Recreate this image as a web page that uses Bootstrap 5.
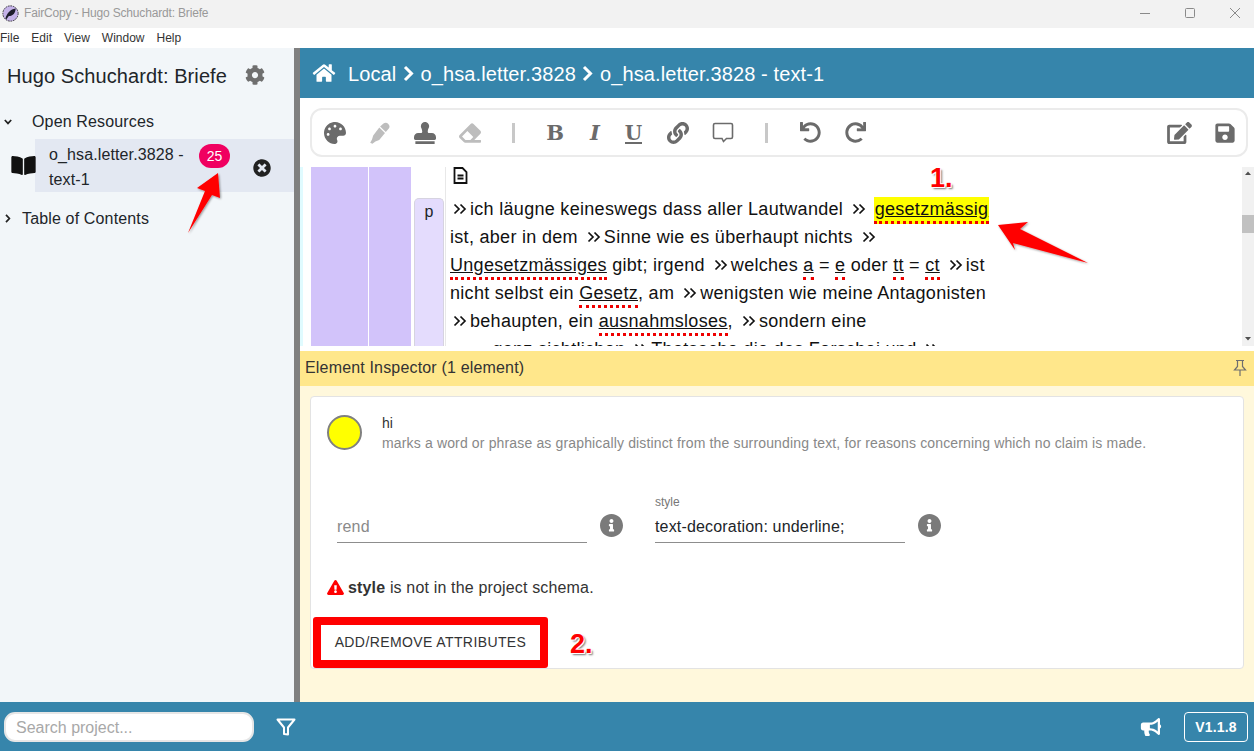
<!DOCTYPE html>
<html lang="en">
<head>
<meta charset="utf-8">
<title>FairCopy - Hugo Schuchardt: Briefe</title>
<link rel="stylesheet" href="https://cdn.jsdelivr.net/npm/bootstrap@5.3.0/dist/css/bootstrap.min.css">
<style>
html,body{height:100%;margin:0}
body{width:1254px;height:751px;overflow:hidden;font-family:"Liberation Sans",Arial,sans-serif;color:#212529;position:relative;background:#fff}
svg{display:block;flex:none}
.fc-title{height:28px;background:#f2f2f2;font-size:12px;letter-spacing:-.17px;color:#999;padding-bottom:2px}
.fc-logo{width:17px;height:17px;margin:0 5px 0 2px}
.fc-wins{margin-right:-3px}
.fc-win{width:45px;height:24px}
.fc-win svg{margin:auto}
.fc-menu{height:20px;font-size:12px;line-height:20px;color:#333;gap:12px}
.fc-main{height:654px}
.fc-side{width:294px;background:#f2f6f9;flex:none}
.fc-split{width:6px;background:#808080;flex:none}
.fc-proj{font-size:20px;line-height:24px;padding:16px 0 0 7px;height:61px;letter-spacing:.09px}
.fc-proj svg{margin-left:18px;fill:#6f6f6f}
.fc-tree{font-size:16px;line-height:24px;letter-spacing:.15px}
.fc-open{height:24px;margin-bottom:6px;padding:1px 0 0 4px;gap:20px}
.fc-toc{height:24px;margin-top:14px;padding:1px 0 0 5px;gap:11px}
.fc-res{height:53px;position:relative}
.fc-res-body{width:259px;margin-left:35px;height:53px;background:#e3e8f2;padding:4px 0 0 14px;line-height:24.5px;font-size:16px;letter-spacing:.12px}
.fc-res-text{width:146px}
.fc-book{position:absolute;left:11px;top:17px;fill:#111}
.fc-count{position:absolute;left:199px;top:5px;width:31px;height:24px;border-radius:12px;background:#f00060;color:#fff;font-size:14px;line-height:24px;text-align:center}
.fc-close{position:absolute;left:253px;top:20px}
.fc-head{height:50px;background:#3685ab;color:#fff;font-size:20px;letter-spacing:.12px;padding:2px 0 0 12px;gap:6.5px}
.fc-head .fc-home{margin:-2px 1.5px 0 0}
.fc-head svg{margin-top:-1px}
.fc-tools{height:69px;padding:10px 6px 10px 10px}
.fc-bar{height:49px;border:2px solid #ebebeb;border-radius:12px}
.fc-t{width:45px;height:45px;display:flex;align-items:center;justify-content:center;flex:none;fill:#6b6b6b;color:#6b6b6b}
.fc-t.fc-narrow{width:40px}
.fc-dim{fill:#bdbdbd}
.fc-sep{width:3px;height:20px;background:#c8c8c8;flex:none}
.fc-g{width:20px;flex:none}
.fc-serif{font-family:"DejaVu Serif",serif;font-weight:700;font-size:21px;line-height:1}
.fc-u{border-bottom:2px solid #6b6b6b;font-family:"DejaVu Serif",serif;font-weight:700;font-size:20px;padding:0;line-height:18px;margin:2px 0 0 -3px}
.fc-endbtn{margin-right:-1px}
.fc-ed{height:179px;overflow:hidden}
.fc-cyan{width:3px;background:#e0fbff;flex:none}
.fc-b1{width:57px;margin-left:8px;background:#d2c3fa;flex:none}
.fc-b2{width:42px;margin-left:1px;background:#d2c3fa;flex:none}
.fc-tab{width:30px;margin:31px 0 0 3px;background:#e4dcfd;border:1px solid #d6d3e0;border-bottom:0;border-radius:5px 5px 0 0;text-align:center;font-size:16px;line-height:26px;flex:none}
.fc-text{margin-left:1px;border-left:1px solid #e8e8e8;padding-left:4px;font-size:18px;letter-spacing:.3px;line-height:28px;color:#111;white-space:nowrap;flex:1 1 auto;width:0;min-width:0}
.fc-doc{height:17px;padding-left:3px;margin-bottom:11px;overflow:hidden}
.fc-line{height:28px;display:flex;align-items:center}
.fc-line svg{margin:0 3px 0 3px}
.fc-sp{width:6px;display:inline-block;flex:none}
.fc-err{text-decoration:underline;border-bottom:3px dotted #e00;line-height:24px;height:27px;display:inline-block;margin-top:3px}
.fc-hl{background:#ff0;margin-left:5px;padding:0 .5px}
.fc-pre{white-space:pre}
.fc-scroll{width:12px;background:#f1f1f1;position:relative;flex:none}
.fc-thumb{position:absolute;top:48px;left:0;width:12px;height:18px;background:#c1c1c1}
.fc-gap{height:5px}
.fc-ins-h{height:35px;background:#ffe78b;font-size:16px;letter-spacing:.17px;padding:0 7px 2px 5px;color:#333}
.fc-ins{height:316px;background:#fff8dc;padding:10px 10px 0}
.fc-card2{height:273px;background:#fff;border:1px solid #e3e3e3;border-radius:4px;position:relative;padding:0 3px}
.fc-circle{width:35px;height:35px;border-radius:50%;background:#ff0;border:2px solid #808080;flex:none;margin:18px 20px 0 13px}
.fc-elname{font-size:14px;line-height:20px;padding-top:16px;color:#333}
.fc-eldesc{font-size:14px;line-height:20px;color:#888;letter-spacing:.15px}
.fc-fields{margin-top:42px;padding-left:23px;height:48px}
.fc-field{width:250px;height:48px;border-bottom:1px solid #8d8d8d;position:relative;font-size:16px;flex:none}
.fc-field small{display:block;font-size:12px;line-height:14px;color:#777;height:14px}
.fc-val{position:absolute;left:0;bottom:5px;line-height:20px;letter-spacing:.17px}
.fc-ph{color:#8a8a8a}
.fc-info{fill:#7a7a7a;margin:19px 32px 0 13px}
.fc-warn{font-size:16px;letter-spacing:.16px;line-height:24px;padding:1px 0 0 13px;margin-top:32px;height:24px;color:#333}
.fc-warn svg{fill:#f00;margin-right:4px}
.fc-act{margin:18px 0 0 -1px;align-self:flex-start;border:8px solid #f00;border-radius:3px;background:#fff;color:#333;font-size:14px;letter-spacing:.4px;width:235px;height:51px;line-height:35px;text-align:center;padding:0;display:block}
.fc-foot{height:49px;background:#3685ab}
.fc-search{width:250px;height:30px;margin-left:4px;border:2px solid #e6e6e6;border-radius:11px;background:#fff;color:#a8a8a8;font-size:16px;padding:3px 10px 0;outline:none;font-family:inherit}
.fc-search::placeholder{color:#a8a8a8;opacity:1}
.fc-filter{margin-left:22px}
.fc-ver{width:64px;height:30px;margin:0 6px 0 22px;padding:0;border:1px solid #fff;border-radius:4px;color:#fff;font-size:14px;font-weight:700;letter-spacing:.2px;background:transparent;line-height:28px}
.fc-note{position:absolute;left:0;top:0;pointer-events:none}
.fc-num{position:absolute;font-size:27px;line-height:26px;font-weight:700;color:#f00;text-shadow:1px 1px 0 #fff,-1px -1px 0 #fff,2px 2px 2px #777}
.fc-n1{left:930px;top:165px}
.fc-n2{left:570px;top:631px}
</style>
</head>
<body>
<div class="fc-title d-flex align-items-center">
  <svg class="fc-logo" viewBox="0 0 20 20"><circle cx="10" cy="10" r="9" fill="#c4b2e8" stroke="#222" stroke-dasharray="2 1"/><path d="M4 16C6 9 10 5 16 4c0 5-3 9-8 9l-3 4z" fill="#1d1d2b"/></svg>
  <span>FairCopy - Hugo Schuchardt: Briefe</span>
  <div class="ms-auto d-flex fc-wins">
    <div class="fc-win d-flex"><svg width="12" height="12" viewBox="0 0 12 12"><path d="M1 6.500h10" stroke="#8a8a8a"/></svg></div>
    <div class="fc-win d-flex"><svg width="12" height="12" viewBox="0 0 12 12"><rect x="1.500" y="1.500" width="9" height="9" rx="1" fill="none" stroke="#8a8a8a"/></svg></div>
    <div class="fc-win d-flex"><svg width="12" height="12" viewBox="0 0 12 12"><path d="M1 1l10 10M11 1L1 11" stroke="#8a8a8a"/></svg></div>
  </div>
</div>
<div class="fc-menu d-flex"><span>File</span><span>Edit</span><span>View</span><span>Window</span><span>Help</span></div>

<div class="fc-main d-flex">
  <aside class="fc-side">
    <div class="fc-proj d-flex">Hugo Schuchardt: Briefe
      <svg width="20" height="22" viewBox="0 0 512 512"><path d="M487.4 315.7l-42.6-24.6c4.3-23.2 4.3-47 0-70.2l42.6-24.6c4.9-2.8 7.1-8.6 5.5-14-11.1-35.6-30-67.8-54.7-94.6-3.8-4.1-10-5.1-14.8-2.3L380.8 110c-17.9-15.4-38.5-27.3-60.8-35.1V25.8c0-5.6-3.9-10.5-9.4-11.7-36.7-8.2-74.3-7.8-109.2 0-5.5 1.2-9.4 6.1-9.4 11.7V75c-22.2 7.9-42.8 19.8-60.8 35.1L88.7 85.5c-4.9-2.8-11-1.9-14.8 2.3-24.7 26.7-43.6 58.9-54.7 94.6-1.7 5.4.6 11.2 5.5 14L67.3 221c-4.3 23.2-4.3 47 0 70.2l-42.6 24.6c-4.9 2.8-7.1 8.6-5.5 14 11.1 35.6 30 67.8 54.7 94.6 3.8 4.1 10 5.1 14.8 2.3l42.6-24.6c17.9 15.4 38.5 27.3 60.8 35.1v49.2c0 5.6 3.9 10.5 9.4 11.7 36.7 8.2 74.3 7.8 109.2 0 5.5-1.2 9.4-6.1 9.4-11.7v-49.2c22.2-7.9 42.8-19.8 60.8-35.1l42.6 24.6c4.9 2.8 11 1.9 14.8-2.3 24.7-26.7 43.6-58.9 54.7-94.6 1.5-5.5-.7-11.3-5.6-14.1zM256 336c-44.1 0-80-35.9-80-80s35.9-80 80-80 80 35.9 80 80-35.9 80-80 80z"/></svg>
    </div>
    <div class="fc-tree fc-open d-flex align-items-center">
      <svg width="8" height="6" viewBox="0 0 8 6"><path d="M.8 1l3.200 3.400L7.200 1" fill="none" stroke="#222" stroke-width="1.700"/></svg>
      <span>Open Resources</span>
    </div>
    <div class="fc-res">
      <svg class="fc-book" width="25" height="19" viewBox="0 30 576 450"><path d="M542.22 32.05c-54.8 3.11-163.72 14.43-230.96 55.59-4.64 2.84-7.27 7.89-7.27 13.17v363.87c0 11.55 12.63 18.85 23.28 13.49 69.18-34.82 169.23-44.32 218.7-46.92 16.89-.89 30.02-14.43 30.02-30.66V62.75c.01-17.71-15.35-31.74-33.77-30.7zM264.73 87.64C197.5 46.48 88.58 35.17 33.78 32.05 15.36 31.01 0 45.04 0 62.75V400.6c0 16.24 13.13 29.78 30.02 30.66 49.49 2.6 149.59 12.11 218.77 46.95 10.62 5.35 23.21-1.94 23.21-13.46V100.63c0-5.29-2.62-10.14-7.27-12.99z"/></svg>
      <div class="fc-res-body"><div class="fc-res-text">o_hsa.letter.3828 - text-1</div></div>
      <span class="fc-count">25</span>
      <svg class="fc-close" width="18" height="18" viewBox="0 0 512 512" fill="#222"><path d="M256 8C119 8 8 119 8 256s111 248 248 248 248-111 248-248S393 8 256 8zm121.6 313.1c4.700 4.700 4.700 12.300 0 17L338 377.600c-4.700 4.700-12.300 4.700-17 0L256 312l-65.100 65.600c-4.700 4.700-12.300 4.700-17 0L134.400 338c-4.700-4.700-4.700-12.300 0-17l65.600-65-65.600-65.100c-4.700-4.700-4.700-12.300 0-17l39.600-39.600c4.700-4.700 12.300-4.700 17 0l65 65.700 65.100-65.600c4.700-4.700 12.300-4.700 17 0l39.600 39.600c4.700 4.700 4.700 12.300 0 17L312 256l65.600 65.100z"/></svg>
    </div>
    <div class="fc-tree fc-toc d-flex align-items-center">
      <svg width="6" height="9" viewBox="0 0 6 9"><path d="M1 .8l3.400 3.700L1 8.200" fill="none" stroke="#222" stroke-width="1.700"/></svg>
      <span>Table of Contents</span>
    </div>
  </aside>
  <div class="fc-split"></div>
  <main class="flex-grow-1 d-flex flex-column" style="min-width:0">
    <div class="fc-head d-flex align-items-center">
      <svg class="fc-home" width="24" height="20" viewBox="0 0 576 512" fill="#fff"><path d="M280.37 148.26L96 300.11V464a16 16 0 0 0 16 16l112.06-.29a16 16 0 0 0 15.92-16V368a16 16 0 0 1 16-16h64a16 16 0 0 1 16 16v95.640a16 16 0 0 0 16 16.050L464 480a16 16 0 0 0 16-16V300L295.670 148.260a12.190 12.190 0 0 0-15.300 0zM571.600 251.470L488 182.560V44.050a12 12 0 0 0-12-12h-56a12 12 0 0 0-12 12v72.610L318.470 43a48 48 0 0 0-61 0L4.340 251.470a12 12 0 0 0-1.600 16.900l25.500 31A12 12 0 0 0 45.150 301l235.220-193.740a12.190 12.190 0 0 1 15.300 0L530.900 301a12 12 0 0 0 16.900-1.600l25.500-31a12 12 0 0 0-1.700-16.930z"/></svg>
      <span class="ms-1">Local</span>
      <svg width="11" height="17" viewBox="0 0 11 17"><path d="M2 2l6.500 6.500L2 15" fill="none" stroke="#fff" stroke-width="3"/></svg>
      <span>o_hsa.letter.3828</span>
      <svg width="11" height="17" viewBox="0 0 11 17"><path d="M2 2l6.500 6.500L2 15" fill="none" stroke="#fff" stroke-width="3"/></svg>
      <span>o_hsa.letter.3828 - text-1</span>
    </div>
    <div class="fc-tools">
      <div class="fc-bar d-flex align-items-center">
        <span class="fc-t"><svg width="22" height="22" viewBox="0 0 512 512"><path d="M204.300 5C104.900 24.400 24.800 104.300 5.200 203.400c-37 187 131.700 326.400 258.800 306.700 41.200-6.400 61.400-54.600 42.500-91.700-23.100-45.400 9.900-98.400 60.900-98.400h79.700c35.800 0 64.800-29.600 64.900-65.300C511.500 97.100 368.100-26.900 204.300 5zM96 320c-17.700 0-32-14.300-32-32s14.300-32 32-32 32 14.300 32 32-14.300 32-32 32zm32-128c-17.700 0-32-14.300-32-32s14.300-32 32-32 32 14.300 32 32-14.300 32-32 32zm128-64c-17.700 0-32-14.300-32-32s14.300-32 32-32 32 14.300 32 32-14.300 32-32 32zm128 64c-17.700 0-32-14.300-32-32s14.300-32 32-32 32 14.300 32 32-14.300 32-32 32z"/></svg></span>
        <span class="fc-t"><svg class="fc-dim" width="22" height="22" viewBox="0 0 22 22"><path d="M14.500 1.500c1.500-1.200 3.500-.9 4.800.4 1.500 1.400 1.600 3.300.5 4.700l-3 3.300-5.700-5.500zM10.300 5.400l5.700 5.600-5.800 7-3.800 1.400-3 2.300-2.200-1 1.800-3.300 1.200-4z"/></svg></span>
        <span class="fc-t"><svg width="22" height="22" viewBox="0 0 512 512"><path d="M32 512h448v-64H32v64zm384-256h-66.560c-16.260 0-29.440-13.180-29.440-29.440v-9.460c0-27.370 8.880-53.410 21.460-77.720 9.110-17.610 12.900-38.390 9.050-60.420-6.770-38.780-38.470-70.700-77.260-77.450C212.620-9.040 160 37.330 160 96c0 14.160 3.120 27.540 8.690 39.580C182.020 164.430 192 194.700 192 226.490v.07c0 16.260-13.180 29.440-29.440 29.440H96c-53.020 0-96 42.980-96 96v32c0 17.670 14.330 32 32 32h448c17.670 0 32-14.330 32-32v-32c0-53.020-42.980-96-96-96z"/></svg></span>
        <span class="fc-t"><svg class="fc-dim" width="22" height="22" viewBox="0 0 512 512"><path d="M497.941 273.941c18.745-18.745 18.745-49.137 0-67.882l-160-160c-18.745-18.745-49.136-18.746-67.883 0l-256 256c-18.745 18.745-18.745 49.137 0 67.882l96 96A48.004 48.004 0 0 0 144 480h356c6.627 0 12-5.373 12-12v-40c0-6.627-5.373-12-12-12H355.883l142.058-142.059zm-302.627-62.627l137.373 137.373L265.373 416H150.628l-80-80 124.686-124.686z"/></svg></span>
        <span class="fc-g"></span><span class="fc-sep"></span><span class="fc-g"></span>
        <span class="fc-t fc-narrow fc-serif">B</span>
        <span class="fc-t fc-narrow fc-serif fst-italic">I</span>
        <span class="fc-t fc-narrow"><span class="fc-u">U</span></span>
        <span class="fc-t"><svg width="22" height="22" viewBox="0 0 512 512"><path d="M326.612 185.391c59.747 59.809 58.927 155.698.36 214.590-.11.12-.24.25-.36.37l-67.200 67.200c-59.270 59.270-155.699 59.262-214.960 0-59.270-59.260-59.270-155.700 0-214.960l37.106-37.106c9.840-9.840 26.786-3.300 27.294 10.606.648 17.722 3.826 35.527 9.690 52.721 1.986 5.822.567 12.262-3.783 16.612l-13.087 13.087c-28.026 28.026-28.905 73.660-1.155 101.960 28.024 28.579 74.086 28.749 102.325.51l67.200-67.190c28.191-28.191 28.073-73.757 0-101.830-3.701-3.694-7.429-6.564-10.341-8.569a16.037 16.037 0 0 1-6.947-12.606c-.396-10.567 3.348-21.456 11.698-29.806l21.054-21.055c5.521-5.521 14.182-6.199 20.584-1.731a152.482 152.482 0 0 1 20.522 17.197zM467.547 44.449c-59.261-59.262-155.690-59.270-214.960 0l-67.200 67.200c-.12.12-.25.25-.36.37-58.566 58.892-59.387 154.781.36 214.590a152.454 152.454 0 0 0 20.521 17.196c6.402 4.468 15.064 3.789 20.584-1.731l21.054-21.055c8.350-8.350 12.094-19.239 11.698-29.806a16.037 16.037 0 0 0-6.947-12.606c-2.912-2.005-6.640-4.875-10.341-8.569-28.073-28.073-28.191-73.639 0-101.830l67.200-67.190c28.239-28.239 74.300-28.069 102.325.51 27.750 28.300 26.872 73.934-1.155 101.960l-13.087 13.087c-4.350 4.350-5.769 10.790-3.783 16.612 5.864 17.194 9.042 34.999 9.690 52.721.509 13.906 17.454 20.446 27.294 10.606l37.106-37.106c59.271-59.259 59.271-155.699.001-214.959z"/></svg></span>
        <span class="fc-t"><svg width="22" height="21" viewBox="0 0 22 21"><path d="M3 1.500h16c.9 0 1.500.6 1.500 1.500v12c0 .9-.6 1.500-1.500 1.500h-4.500l-3 3-1.500-3H3c-.9 0-1.500-.6-1.500-1.500V3c0-.9.6-1.500 1.500-1.500z" fill="none" stroke="#6b6b6b" stroke-width="1.600"/></svg></span>
        <span class="fc-g"></span><span class="fc-sep"></span><span class="fc-g"></span>
        <span class="fc-t"><svg width="21" height="21" viewBox="0 0 512 512"><path d="M212.333 224.333H12c-6.627 0-12-5.373-12-12V12C0 5.373 5.373 0 12 0h48c6.627 0 12 5.373 12 12v78.112C117.773 39.279 184.260 7.470 258.175 8.007c136.906.994 246.448 111.623 246.157 248.532C504.041 393.258 393.120 504 256.333 504c-64.089 0-122.496-24.313-166.510-64.215-5.099-4.622-5.334-12.554-.467-17.420l33.967-33.967c4.474-4.474 11.662-4.717 16.401-.525C170.760 415.336 211.580 432 256.333 432c97.268 0 176-78.716 176-176 0-97.267-78.716-176-176-176-58.496 0-110.280 28.476-142.274 72.333h98.274c6.627 0 12 5.373 12 12v48c0 6.627-5.373 12-12 12z"/></svg></span>
        <span class="fc-t"><svg width="21" height="21" viewBox="0 0 512 512"><path d="M500.330 0h-47.410a12 12 0 0 0-12 12.570l4 82.760A247.420 247.420 0 0 0 256 8C119.340 8 7.900 119.530 8 256.190 8.100 393.070 119.100 504 256 504a247.100 247.100 0 0 0 166.180-63.910 12 12 0 0 0 .48-17.430l-34-34a12 12 0 0 0-16.380-.55A176 176 0 1 1 402.100 157.800l-101.530-4.870a12 12 0 0 0-12.570 12v47.410a12 12 0 0 0 12 12h200.330a12 12 0 0 0 12-12V12a12 12 0 0 0-12-12z"/></svg></span>
        <span class="fc-t ms-auto"><svg width="25" height="22" viewBox="0 0 576 512"><path d="M402.600 83.200l90.200 90.200c3.800 3.800 3.800 10 0 13.800L274.400 405.600l-92.800 10.300c-12.400 1.400-22.900-9.100-21.500-21.500l10.300-92.800L388.800 83.200c3.800-3.800 10-3.800 13.800 0zm162-22.900l-48.800-48.800c-15.200-15.200-39.900-15.200-55.200 0l-35.400 35.400c-3.800 3.800-3.800 10 0 13.800l90.200 90.200c3.800 3.800 10 3.800 13.800 0l35.400-35.400c15.200-15.300 15.200-40 0-55.200zM384 346.200V448H64V128h229.800c3.200 0 6.200-1.300 8.500-3.500l40-40c7.600-7.600 2.200-20.500-8.500-20.500H48C21.500 64 0 85.500 0 112v352c0 26.500 21.500 48 48 48h352c26.500 0 48-21.500 48-48V306.200c0-10.700-12.900-16-20.500-8.500l-40 40c-2.200 2.300-3.500 5.300-3.500 8.500z"/></svg></span>
        <span class="fc-t fc-endbtn"><svg width="20" height="22" viewBox="0 0 448 512"><path d="M433.941 129.941l-83.882-83.882A48 48 0 0 0 316.118 32H48C21.490 32 0 53.490 0 80v352c0 26.510 21.490 48 48 48h352c26.510 0 48-21.490 48-48V163.882a48 48 0 0 0-14.059-33.941zM224 416c-35.346 0-64-28.654-64-64 0-35.346 28.654-64 64-64s64 28.654 64 64c0 35.346-28.654 64-64 64zm96-304.520V212c0 6.627-5.373 12-12 12H76c-6.627 0-12-5.373-12-12V108c0-6.627 5.373-12 12-12h228.520c3.183 0 6.235 1.264 8.485 3.515l3.480 3.480A11.996 11.996 0 0 1 320 111.480z"/></svg></span>
      </div>
    </div>
    <div class="fc-ed d-flex">
      <div class="fc-cyan"></div><div class="fc-b1"></div><div class="fc-b2"></div>
      <div class="fc-tab">p</div>
      <div class="fc-text">
        <div class="fc-doc"><svg width="15" height="17" viewBox="0 0 15 17"><path d="M1.500 1h8l4 4v11h-12zM4.500 8.500h6M4.500 11.500h6" fill="none" stroke="#111" stroke-width="1.800"/></svg></div>
        <div class="fc-line"><svg width="14" height="12" viewBox="0 0 14 12"><use href="#dbl"/></svg><span>ich läugne keineswegs dass aller Lautwandel</span><span class="fc-sp"></span><svg width="14" height="12" viewBox="0 0 14 12"><use href="#dbl"/></svg><span class="fc-err fc-hl">gesetzmässig</span></div>
        <div class="fc-line"><span>ist, aber in dem</span><span class="fc-sp"></span><svg width="14" height="12" viewBox="0 0 14 12"><use href="#dbl"/></svg><span>Sinne wie es überhaupt nichts</span><span class="fc-sp"></span><svg width="14" height="12" viewBox="0 0 14 12"><use href="#dbl"/></svg></div>
        <div class="fc-line"><span class="fc-err">Ungesetzmässiges</span><span class="fc-pre"> gibt; irgend</span><span class="fc-sp"></span><svg width="14" height="12" viewBox="0 0 14 12"><use href="#dbl"/></svg><span class="fc-pre">welches </span><span class="fc-err">a</span><span class="fc-pre"> = </span><span class="fc-err">e</span><span class="fc-pre"> oder </span><span class="fc-err">tt</span><span class="fc-pre"> = </span><span class="fc-err">ct</span><span class="fc-sp"></span><svg width="14" height="12" viewBox="0 0 14 12"><use href="#dbl"/></svg><span>ist</span></div>
        <div class="fc-line"><span class="fc-pre">nicht selbst ein </span><span class="fc-err">Gesetz</span><span class="fc-pre">, am</span><span class="fc-sp"></span><svg width="14" height="12" viewBox="0 0 14 12"><use href="#dbl"/></svg><span>wenigsten wie meine Antagonisten</span></div>
        <div class="fc-line"><svg width="14" height="12" viewBox="0 0 14 12"><use href="#dbl"/></svg><span class="fc-pre">behaupten, ein </span><span class="fc-err">ausnahmsloses</span><span>,</span><span class="fc-sp"></span><svg width="14" height="12" viewBox="0 0 14 12"><use href="#dbl"/></svg><span>sondern eine</span></div>
        <div class="fc-line"><span class="fc-pre">        ganz sichtlichen</span><span class="fc-sp"></span><svg width="14" height="12" viewBox="0 0 14 12"><use href="#dbl"/></svg><span>Thatsache die das Forschei und</span><span class="fc-sp"></span><svg width="14" height="12" viewBox="0 0 14 12"><use href="#dbl"/></svg></div>
      </div>
      <div class="fc-scroll">
        <svg class="position-absolute top-0" width="12" height="179" viewBox="0 0 12 179" fill="#505050"><path d="M3 8l3-3.500L9 8zM3 170l3 3.500 3-3.500z"/></svg>
        <div class="fc-thumb"></div>
      </div>
    </div>
    <div class="fc-gap"></div>
    <div class="fc-ins-h d-flex align-items-center justify-content-between">
      <span>Element Inspector (1 element)</span>
      <svg width="14" height="18" viewBox="0 0 14 18"><path d="M3 1.500h8M4.500 1.500v6L1.500 11h11l-3-3.500v-6M7 11v6" fill="none" stroke="#6f6f6f" stroke-width="1.200"/></svg>
    </div>
    <div class="fc-ins">
      <div class="fc-card2 d-flex flex-column">
        <div class="d-flex">
          <div class="fc-circle"></div>
          <div>
            <div class="fc-elname">hi</div>
            <div class="fc-eldesc">marks a word or phrase as graphically distinct from the surrounding text, for reasons concerning which no claim is made.</div>
          </div>
        </div>
        <div class="fc-fields d-flex">
          <div class="fc-field"><span class="fc-val fc-ph">rend</span></div>
          <svg class="fc-info" width="23" height="23" viewBox="8 8 496 496"><use href="#inf"/></svg>
          <div class="fc-field"><small>style</small><span class="fc-val">text-decoration: underline;</span></div>
          <svg class="fc-info" width="23" height="23" viewBox="8 8 496 496"><use href="#inf"/></svg>
        </div>
        <div class="fc-warn d-flex align-items-center">
          <svg width="17" height="15" viewBox="0 0 576 512"><path d="M569.517 440.013C587.975 472.007 564.806 512 527.940 512H48.054c-36.937 0-59.999-40.055-41.577-71.987L246.423 23.985c18.467-32.009 64.720-31.951 83.154 0l239.940 416.028zM288 354c-25.405 0-46 20.595-46 46s20.595 46 46 46 46-20.595 46-46-20.595-46-46-46zm-43.673-165.346l7.418 136c.347 6.364 5.609 11.346 11.982 11.346h48.546c6.373 0 11.635-4.982 11.982-11.346l7.418-136c.375-6.874-5.098-12.654-11.982-12.654h-63.383c-6.884 0-12.356 5.780-11.981 12.654z"/></svg>
          <span><b>style</b> is not in the project schema.</span>
        </div>
        <button class="fc-act" type="button">ADD/REMOVE ATTRIBUTES</button>
      </div>
    </div>
  </main>
</div>

<footer class="fc-foot d-flex align-items-center">
  <input class="fc-search" placeholder="Search project..." aria-label="Search project">
  <svg class="fc-filter" width="20" height="20" viewBox="0 0 20 20"><path d="M1.500 2.500h17L12 10.500v7l-4-.5v-6.500z" fill="none" stroke="#fff" stroke-width="2" stroke-linejoin="round"/></svg>
  <svg class="ms-auto" width="22" height="18" viewBox="0 0 576 512" fill="#fff"><path d="M576 240c0-23.630-12.950-44.040-32-55.120V32.010C544 23.260 537.020 0 512 0c-7.120 0-14.190 2.380-19.980 7.020l-85.030 68.030C364.280 109.190 310.660 128 256 128H64c-35.350 0-64 28.650-64 64v96c0 35.350 28.650 64 64 64h33.700c-1.390 10.480-2.180 21.140-2.180 32 0 39.770 9.260 77.350 25.560 110.940 5.190 10.690 16.520 17.060 28.400 17.060h74.280c26.050 0 41.690-29.840 25.900-50.560-16.400-21.520-26.150-48.360-26.150-77.440 0-11.110 1.620-21.790 4.410-32H256c54.660 0 108.280 18.810 150.980 52.950l85.030 68.030a32.023 32.023 0 0 0 19.980 7.020c24.920 0 32-22.780 32-32V295.130C563.050 284.040 576 263.630 576 240zm-96 141.420l-33.050-26.440C392.950 311.780 325.120 288 256 288v-96c69.120 0 136.950-23.780 190.950-66.980L480 98.580v282.840z"/></svg>
  <button class="fc-ver" type="button">V1.1.8</button>
</footer>

<svg class="fc-note" width="1254" height="751" viewBox="0 0 1254 751">
  <defs>
    <filter id="sh" x="-20%" y="-20%" width="140%" height="140%"><feDropShadow dx="1" dy="1" stdDeviation="1" flood-color="#000" flood-opacity=".4"/></filter>
    <path id="dbl" d="M1.500 1.500L6 6l-4.500 4.500M7.500 1.500L12 6l-4.500 4.500" fill="none" stroke="#111" stroke-width="1.700"/>
    <path id="inf" d="M256 8C119.043 8 8 119.083 8 256c0 136.997 111.043 248 248 248s248-111.003 248-248C504 119.083 392.957 8 256 8zm0 110c23.196 0 42 18.804 42 42s-18.804 42-42 42-42-18.804-42-42 18.804-42 42-42zm56 254c0 6.627-5.373 12-12 12h-88c-6.627 0-12-5.373-12-12v-24c0-6.627 5.373-12 12-12h12v-64h-12c-6.627 0-12-5.373-12-12v-24c0-6.627 5.373-12 12-12h64c6.627 0 12 5.373 12 12v100h12c6.627 0 12 5.373 12 12v24z"/>
  </defs>
  <polygon filter="url(#sh)" fill="#f00" points="218,173 197,188 205,191 188,233 212,195 220,198"/>
  <polygon filter="url(#sh)" fill="#f00" points="998,225 1028,222 1020,229 1088,263 1013,243 1015,250"/>
</svg>
<div class="fc-num fc-n1">1.</div>
<div class="fc-num fc-n2">2.</div>
</body>
</html>
